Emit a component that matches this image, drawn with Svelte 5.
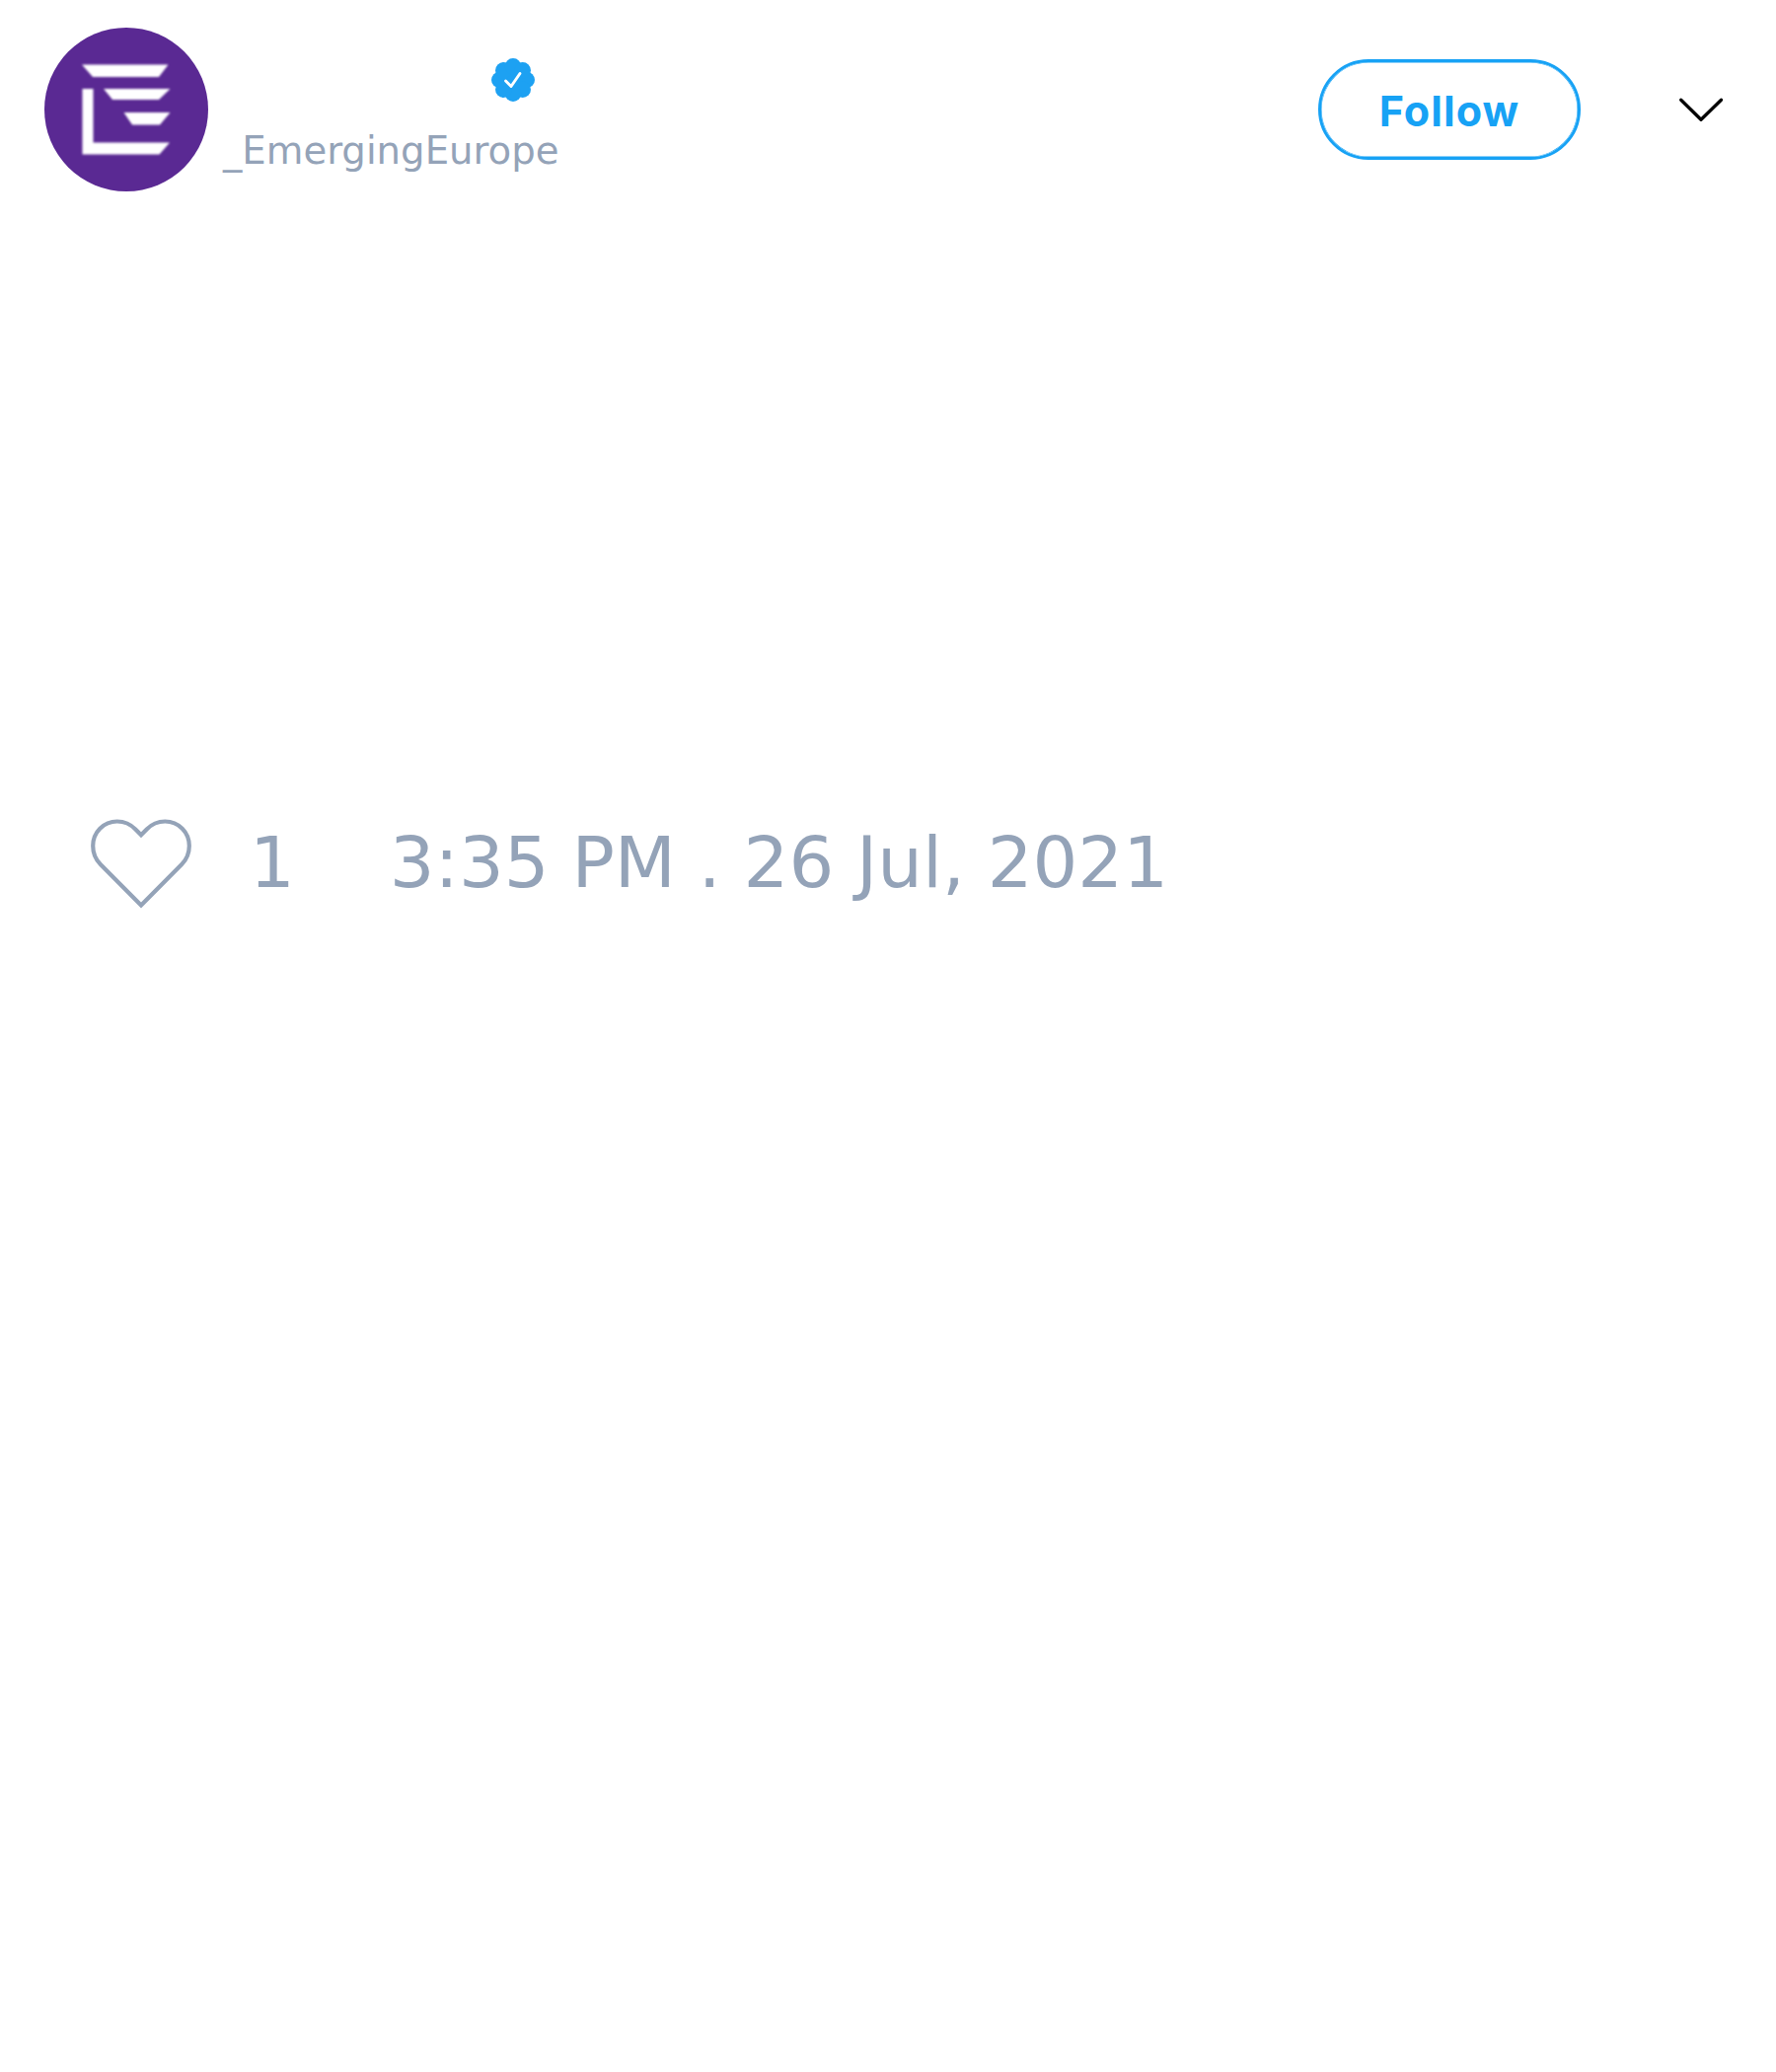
<script>
  const handle = '_EmergingEurope';
  const likes = 1;
  const posted = '3:35 PM . 26 Jul, 2021';
  // Offsets of the eight scalloped lobes around the badge centre
  const lobes = Array.from({ length: 8 }, (_, i) => [
    22 + 13.7 * Math.cos((i * Math.PI) / 4),
    22 + 13.7 * Math.sin((i * Math.PI) / 4),
  ]);
</script>

<article class="post">
  <header>
    <svg class="avatar" viewBox="0 0 166 166" aria-hidden="true">
      <circle cx="83" cy="83" r="83" fill="#5a2993" />
      <g class="mark" fill="#fff">
        <path d="M38 37.500H125.500L116 50H49Z" />
        <path d="M60 62H127.500L116 73H69Z" />
        <path d="M80.500 86H127.500L117 98.500H89Z" />
        <path d="M38.500 62H49.500V116.500H127L116.500 128.500H38.500Z" />
      </g>
    </svg>
    <div class="identity">
      <div class="name">
        <svg class="badge" viewBox="0 0 44 44" aria-hidden="true">
          <g fill="#1da1f2">
            <circle cx="22" cy="22" r="15.500" />
            {#each lobes as [x, y]}
              <circle cx={x} cy={y} r="8.300" />
            {/each}
          </g>
          <path d="M14.500 23L20 28.500L29 15.500" fill="none" stroke="#fff" stroke-width="2.900" stroke-linecap="round" stroke-linejoin="round" />
        </svg>
      </div>
      <div class="handle">{handle}</div>
    </div>
    <button class="follow" type="button">Follow</button>
    <svg class="chevron" viewBox="0 0 46 26" aria-hidden="true">
      <path d="M2.700 3.200L23 23.200L43.500 3.200" fill="none" stroke="#000" stroke-width="3.300" stroke-linecap="round" stroke-linejoin="round" />
    </svg>
  </header>
  <footer>
    <svg class="heart" viewBox="0 0 104 92" aria-hidden="true">
      <path d="M52 16.200L46.300 10.500C41.500 5.500 34.500 2.500 27.700 2.500C14 2.500 3.200 13.500 3.200 27.300C3.200 34.300 6 41.200 10.800 46L52 87.500L93.200 46C98 41.200 100.800 34.300 100.800 27.300C100.800 13.500 90 2.500 76.300 2.500C69.500 2.500 62.500 5.500 57.700 10.500Z" fill="none" stroke="#94a3b8" stroke-width="4.200" />
    </svg>
    <span class="likes">{likes}</span>
    <time>{posted}</time>
  </footer>
</article>

<style>
  :global(body) {
    background: #fff;
  }
  .post {
    box-sizing: border-box;
    width: 1800px;
    height: 2100px;
    padding: 28px 53px 0 45px;
    color: #94a3b8;
    font-family: 'DejaVu Sans', sans-serif;
  }
  header {
    display: flex;
    align-items: center;
    height: 166px;
  }
  svg {
    display: block;
    flex: none;
  }
  .avatar {
    width: 166px;
    height: 166px;
  }
  .mark {
    filter: blur(0.9px);
  }
  .identity {
    flex: 1;
    align-self: stretch;
    padding: 31px 0 0 15px;
  }
  .name {
    height: 44px;
    padding-left: 272px;
  }
  .badge {
    width: 44px;
    height: 44px;
  }
  .handle {
    margin-top: 26px;
    font-size: 38.65px;
    line-height: 48px;
    white-space: nowrap;
  }
  .follow {
    box-sizing: border-box;
    width: 266px;
    height: 102px;
    margin-right: 99px;
    padding: 2px 0 0;
    border: 3px solid #17a2f5;
    border-radius: 51px;
    background: transparent;
    box-shadow: inset 0 0 0 0.5px #17a2f5;
    color: #17a2f5;
    font: 700 43px/60px Inter, sans-serif;
    letter-spacing: 0.025em;
  }
  .chevron {
    width: 46px;
    height: 26px;
  }
  footer {
    display: flex;
    align-items: center;
    height: 92px;
    margin-top: 636px;
    padding-left: 46px;
    font-size: 72px;
    line-height: 84px;
    white-space: pre;
  }
  .heart {
    width: 104px;
    height: 92px;
  }
  .likes {
    margin: -4px 0 0 58px;
  }
  time {
    margin: -4px 0 0 96px;
  }
</style>
